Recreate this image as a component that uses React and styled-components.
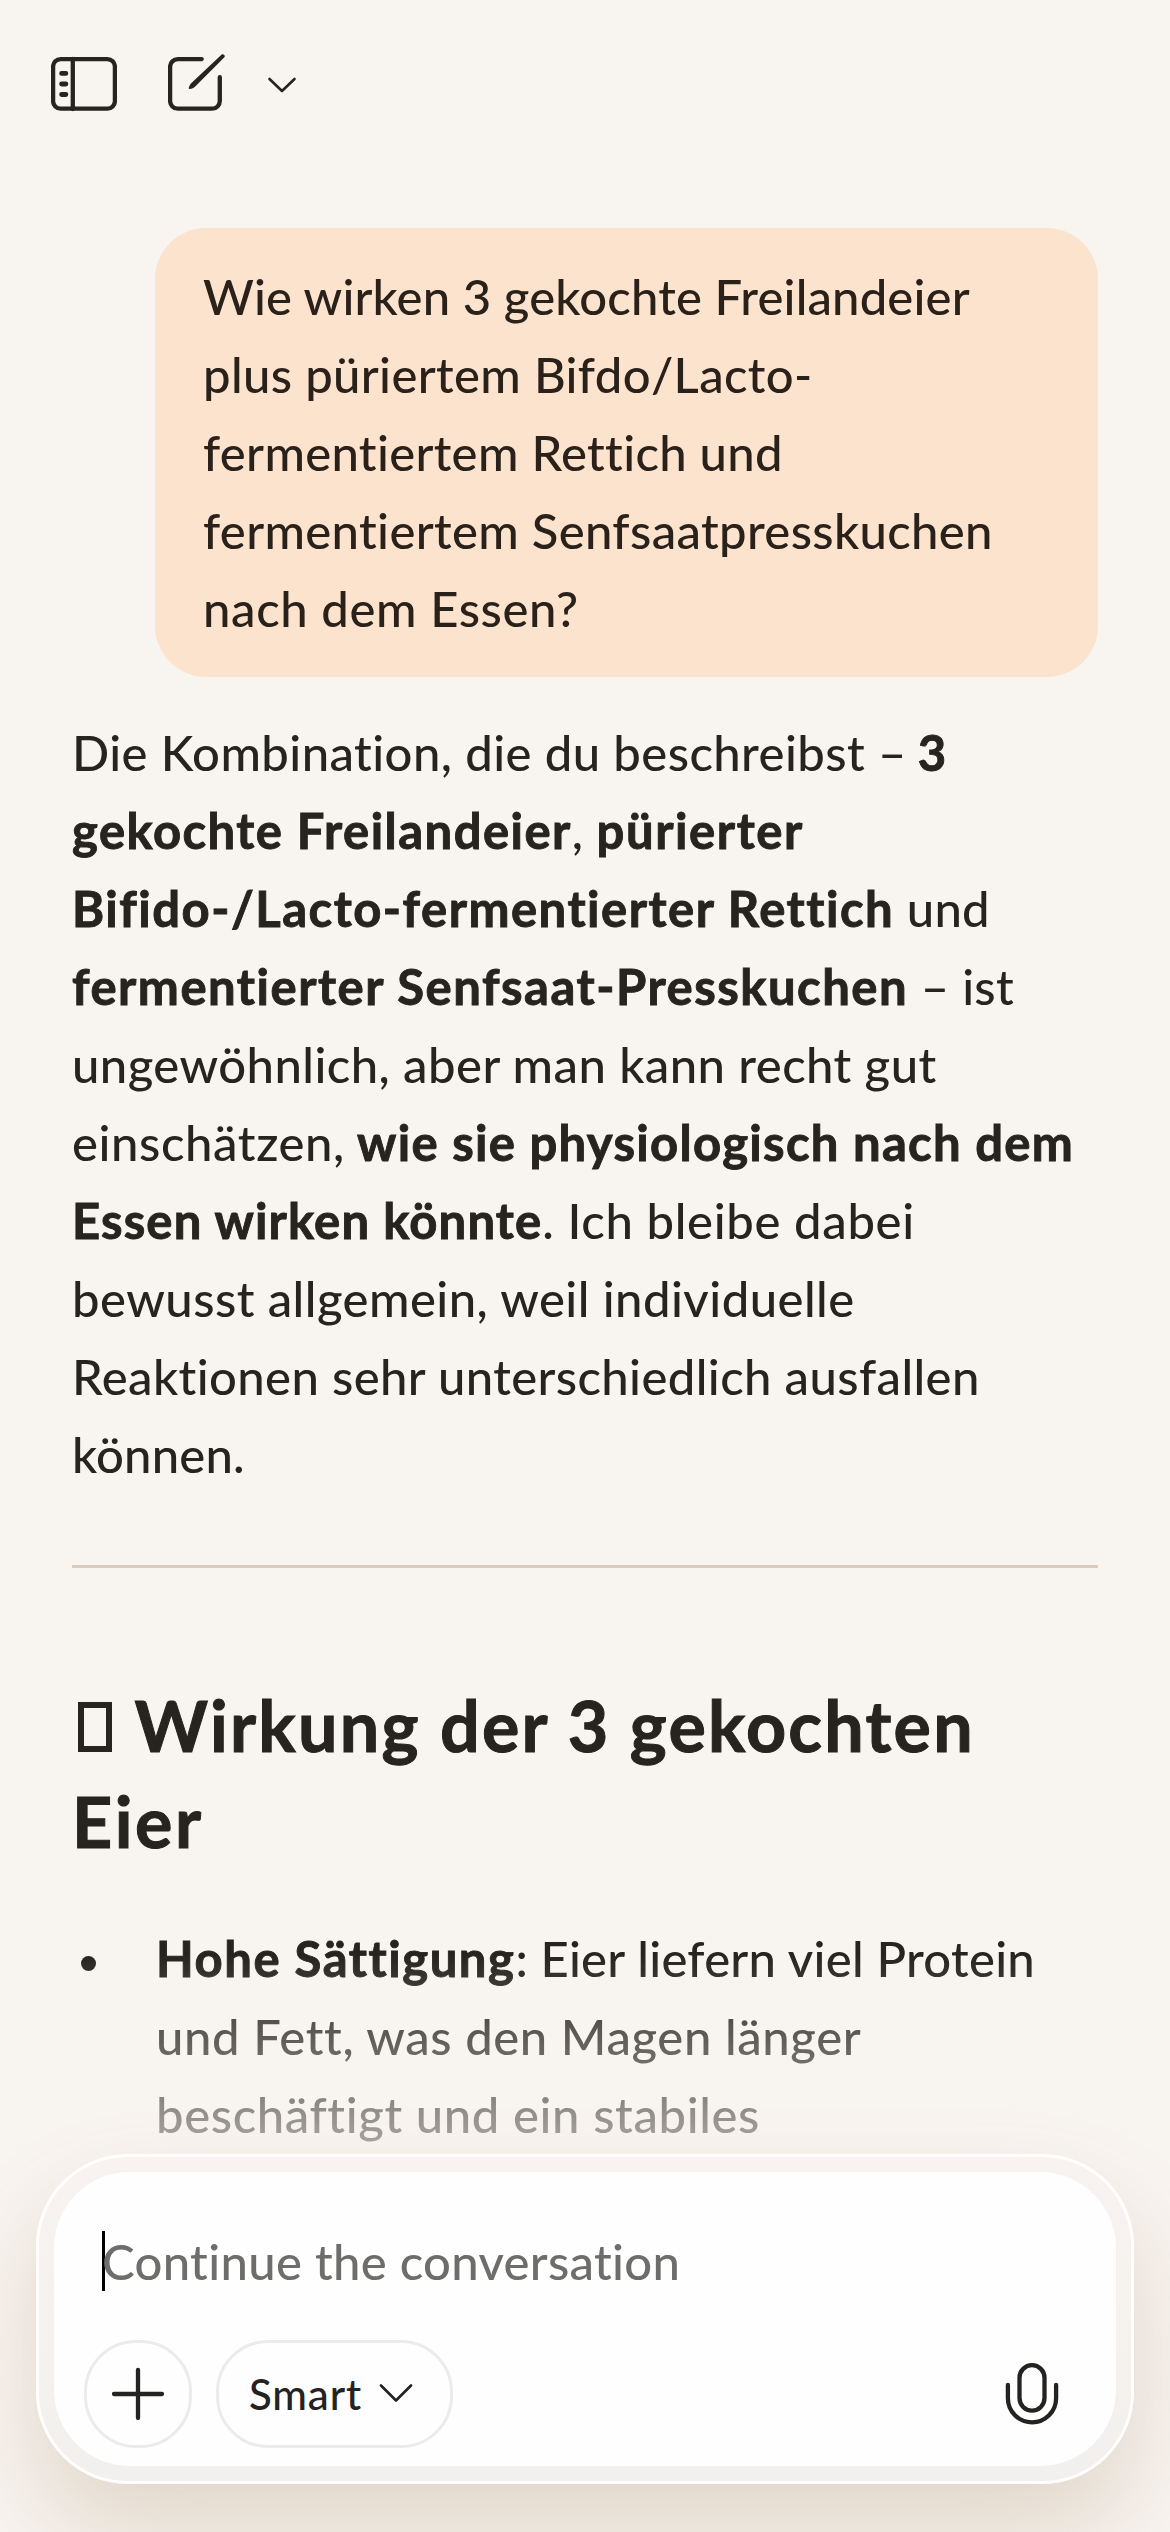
import React from "react";
import styled, { createGlobalStyle } from "styled-components";

const Global = createGlobalStyle`
  *, *::before, *::after { box-sizing: border-box; }
  body { margin: 0; background: #f8f4f0; }
`;

const Screen = styled.div`
  width: 1170px;
  height: 2532px;
  display: flex;
  flex-direction: column;
  overflow: hidden;
  background: #f8f4f0;
  color: #272320;
  font-family: Lato, "Open Sans", sans-serif;
  font-size: 49px;
  font-weight: 500;
  font-variant-ligatures: none;
`;

const Header = styled.header`
  flex: none;
  display: flex;
  align-items: flex-start;
  height: 228px;
  padding: 54px 0 0 51px;
`;

const IconButton = styled.button`
  display: flex;
  padding: 0;
  margin: 0 ${p => p.$after || 0}px 0 0;
  border: 0;
  background: none;
  color: inherit;
`;

const Icon = styled.svg`
  display: block;
  fill: none;
  stroke: currentColor;
  stroke-width: ${p => p.$stroke || 4.3};
  stroke-linecap: round;
  stroke-linejoin: round;
`;

const Conversation = styled.main`
  flex: none;
  display: flex;
  flex-direction: column;
  height: 1926px;
  padding: 0 72px;
  overflow: hidden;
  mask-image: linear-gradient(to bottom, #000 1727px, transparent 2032px);
`;

const Bubble = styled.section`
  align-self: flex-end;
  width: 943px;
  height: 449px;
  padding: 29px 48px;
  border-radius: 51px;
  background: #fbe3cd;
  color: #2a211a;
`;

const Line = styled.div`
  height: ${p => p.$height || 78}px;
  line-height: ${p => p.$height || 78}px;
  white-space: pre;
`;

const Run = styled.span`
  font-weight: ${p => (p.$bold ? 700 : "inherit")};
  letter-spacing: ${p => p.$track || 0}px;
  -webkit-text-stroke: ${p => (p.$bold ? "0.9px currentColor" : "inherit")};
`;

const Answer = styled.article`
  padding-top: 36px;
`;

const Divider = styled.hr`
  height: 3px;
  margin: 72px 0 109px;
  border: 0;
  background: #dacdc0;
`;

const Heading = styled.h2`
  margin: 0 0 50px;
  font-size: 70px;
  font-weight: 700;
  -webkit-text-stroke: 1px currentColor;
`;

const MissingGlyph = styled.span`
  display: inline-block;
  width: 34px;
  height: 50px;
  margin: 0 23px 0 5.5px;
  border: 6px solid currentColor;
`;

const List = styled.ul`
  margin: 0;
  padding: 0;
  list-style: none;
`;

const Item = styled.li`
  display: flex;
`;

const Bullet = styled.span`
  flex: none;
  width: 15px;
  height: 15px;
  margin: 37px 60px 0 9px;
  border-radius: 50%;
  background: currentColor;
`;

const Composer = styled.form`
  flex: none;
  width: 1098px;
  height: 330px;
  margin: 0 36px;
  padding: 15px;
  border: 3px solid #fffefd;
  border-radius: 92px;
  background: linear-gradient(#f8f3f0, #f2f0ee);
  box-shadow: 0 48px 96px rgba(135, 101, 55, 0.2);
`;

const Field = styled.div`
  display: flex;
  flex-direction: column;
  height: 294px;
  padding: 50px 48px 18px 30px;
  border-radius: 76px;
  background: #fefefe;
`;

const Prompt = styled.div`
  display: flex;
  align-items: center;
  height: 78px;
  margin: 0 0 40px 18px;
  color: #6f6d6b;
`;

const Caret = styled.span`
  width: 3px;
  height: 60px;
  margin: 0 -3px 0 0;
  background: #000;
`;

const Actions = styled.div`
  display: flex;
  align-items: center;
  color: #242321;
`;

const Pill = styled.button`
  display: flex;
  align-items: center;
  justify-content: center;
  gap: 17px;
  width: ${p => p.$width}px;
  height: 108px;
  margin: 0 24px 0 0;
  padding: 0 ${p => p.$inset || 0}px 0 0;
  border: 3px solid #ebebeb;
  border-radius: 52px;
  background: none;
  color: inherit;
  font: inherit;
  font-size: 42px;
`;

const Mic = styled(IconButton)`
  margin-left: auto;
`;

const question = [
  [["Wie wirken 3 gekochte Freilandeier", 0.15]],
  [["plus püriertem Bifdo/Lacto-", 0.36]],
  [["fermentiertem Rettich und", 0.32]],
  [["fermentiertem Senfsaatpresskuchen", 0.35]],
  [["nach dem Essen?", 0.63]],
];

const intro = [
  [["Die Kombination, die du beschreibst –", 0.43], [" 3", -1, true]],
  [["gekochte Freilandeier", 1.46, true], [",", 0], [" pürierter", 1.59, true]],
  [["Bifido-/Lacto-fermentierter Rettich", 1.49, true], [" und", 0.23]],
  [["fermentierter Senfsaat-Presskuchen", 1.5, true], [" – ist", 0.29]],
  [["ungewöhnlich, aber man kann recht gut", 0.45]],
  [["einschätzen,", 0.6], [" wie sie physiologisch nach dem", 1.3, true]],
  [["Essen wirken könnte", 1.15, true], [". Ich bleibe dabei", 0.65]],
  [["bewusst allgemein, weil individuelle", 0.46]],
  [["Reaktionen sehr unterschiedlich ausfallen", 0.4]],
  [["können.", 0.18]],
];

const effects = [
  [["Hohe Sättigung", 1.54, true], [":", 0], [" Eier liefern viel Protein", 0.28]],
  [["und Fett, was den Magen länger", 0.61]],
  [["beschäftigt und ein stabiles", 0.62]],
];

function Lines({ lines }) {
  return lines.map((runs, i) => (
    <Line key={i}>
      {runs.map(([text, track, bold]) => (
        <Run key={text} $track={track} $bold={bold}>{text}</Run>
      ))}
    </Line>
  ));
}

export default function App() {
  return (
    <Screen>
      <Global />
      <Header>
        <IconButton aria-label="Sidebar" $after={51}>
          <Icon width="66" height="60" viewBox="0 0 66 60">
            <rect x="2.1" y="5.1" width="61.8" height="49.6" rx="7.5" />
            <path d="M21.8 5v50" />
            <path d="M10.6 19.4h4.3M10.6 30h4.3M10.6 40.5h4.3" strokeWidth="4.8" />
          </Icon>
        </IconButton>
        <IconButton aria-label="New chat" $after={36}>
          <Icon width="60" height="60" viewBox="0 0 60 60">
            <path d="M33.7 5.1H9.8a7.7 7.7 0 0 0-7.7 7.7V47a7.7 7.7 0 0 0 7.7 7.7h34.3a7.7 7.7 0 0 0 7.7-7.7V23.2" />
            <path
              d="M53.7 0.6c1.2-1.2 4.1 1 2.7 2.6L27.2 32.4c-1.4 1.4-3.3 2.2-5.6 2.5-.8.1-1-.5-.8-1.1.5-1.9 1.5-3.8 2.9-5.1z"
              fill="currentColor"
              stroke="none"
            />
          </Icon>
        </IconButton>
        <IconButton aria-label="More">
          <Icon $stroke={2.6} width="36" height="60" viewBox="0 0 36 60">
            <path d="M5.5 25 18 37 30.5 25" />
          </Icon>
        </IconButton>
      </Header>

      <Conversation>
        <Bubble><Lines lines={question} /></Bubble>
        <Answer>
          <Lines lines={intro} />
          <Divider />
          <Heading>
            <Line $height={96}>
              <MissingGlyph />
              <Run $track={2.25}>Wirkung der 3 gekochten</Run>
            </Line>
            <Line $height={96}><Run $track={2.55}>Eier</Run></Line>
          </Heading>
          <List>
            <Item>
              <Bullet />
              <div><Lines lines={effects} /></div>
            </Item>
          </List>
        </Answer>
      </Conversation>

      <Composer>
        <Field>
          <Prompt>
            <Caret />
            <Run $track={0.33}>Continue the conversation</Run>
          </Prompt>
          <Actions>
            <Pill type="button" $width={108} aria-label="Add">
              <Icon width="54" height="54" viewBox="0 0 54 54">
                <path d="M27 3v48M3 27h48" />
              </Icon>
            </Pill>
            <Pill type="button" $width={237} $inset={7}>
              <Run $track={0.88}>Smart</Run>
              <Icon $stroke={2.7} width="34" height="22" viewBox="0 0 34 22">
                <path d="M2 2.5 17 17.5 32 2.5" />
              </Icon>
            </Pill>
            <Mic type="button" aria-label="Dictate">
              <Icon width="72" height="72" viewBox="0 0 72 72">
                <rect x="23.5" y="7.2" width="25" height="45.4" rx="12.5" />
                <path d="M11.9 27v13.2a24.1 24.1 0 0 0 48.2 0V27" />
              </Icon>
            </Mic>
          </Actions>
        </Field>
      </Composer>
    </Screen>
  );
}
